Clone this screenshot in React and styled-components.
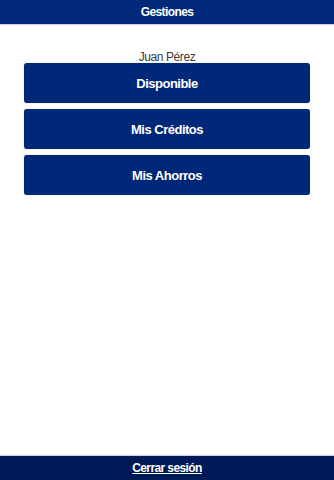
import styled, { createGlobalStyle } from 'styled-components';

const items = ['Disponible', 'Mis Créditos', 'Mis Ahorros'];

export default function App() {
  return (
    <>
      <GlobalStyle />
      <Page>
        <Header>Gestiones</Header>
        <Main>
          <UserName>Juan Pérez</UserName>
          <Menu>
            {items.map(item => (
              <MenuButton key={item}>{item}</MenuButton>
            ))}
          </Menu>
        </Main>
        <Footer>
          <Logout href="#">Cerrar sesión</Logout>
        </Footer>
      </Page>
    </>
  );
}

const GlobalStyle = createGlobalStyle`
  html, body {
    margin: 0;
    padding: 0;
    background: #fff;
    font-family: "Liberation Sans", Arial, sans-serif;
  }
`;

const Page = styled.div`
  display: flex;
  flex-direction: column;
  min-height: 100vh;
`;

const Header = styled.header`
  height: 24px;
  display: flex;
  align-items: center;
  justify-content: center;
  background: #00297a;
  border-bottom: 1px solid #c9d1e6;
  color: #fff;
  font-weight: bold;
  font-size: 12px;
  letter-spacing: -0.6px;
`;

const Main = styled.main`
  flex: 1;
  display: flex;
  flex-direction: column;
  align-items: center;
  padding: 24px 24px 0;
`;

const UserName = styled.p`
  margin: 0;
  height: 14px;
  line-height: 16px;
  font-size: 12px;
  letter-spacing: -0.4px;
  color: #3a3a3a;
`;

const Menu = styled.nav`
  width: 100%;
  display: flex;
  flex-direction: column;
  gap: 6px;
`;

const MenuButton = styled.button`
  height: 40px;
  width: 100%;
  border: none;
  border-radius: 3px;
  background: #002878;
  color: #fff;
  font-family: "Liberation Sans", Arial, sans-serif;
  font-weight: bold;
  font-size: 13px;
  letter-spacing: -0.5px;
  box-shadow: 0 0 1px rgba(0, 20, 80, 0.4);
  cursor: pointer;
`;

const Footer = styled.footer`
  height: 24px;
  display: flex;
  align-items: center;
  justify-content: center;
  background: #001a57;
  border-top: 1px solid #c9d1e6;
`;

const Logout = styled.a`
  color: #fff;
  font-weight: bold;
  font-size: 12px;
  letter-spacing: -0.6px;
  text-decoration: underline;
`;
